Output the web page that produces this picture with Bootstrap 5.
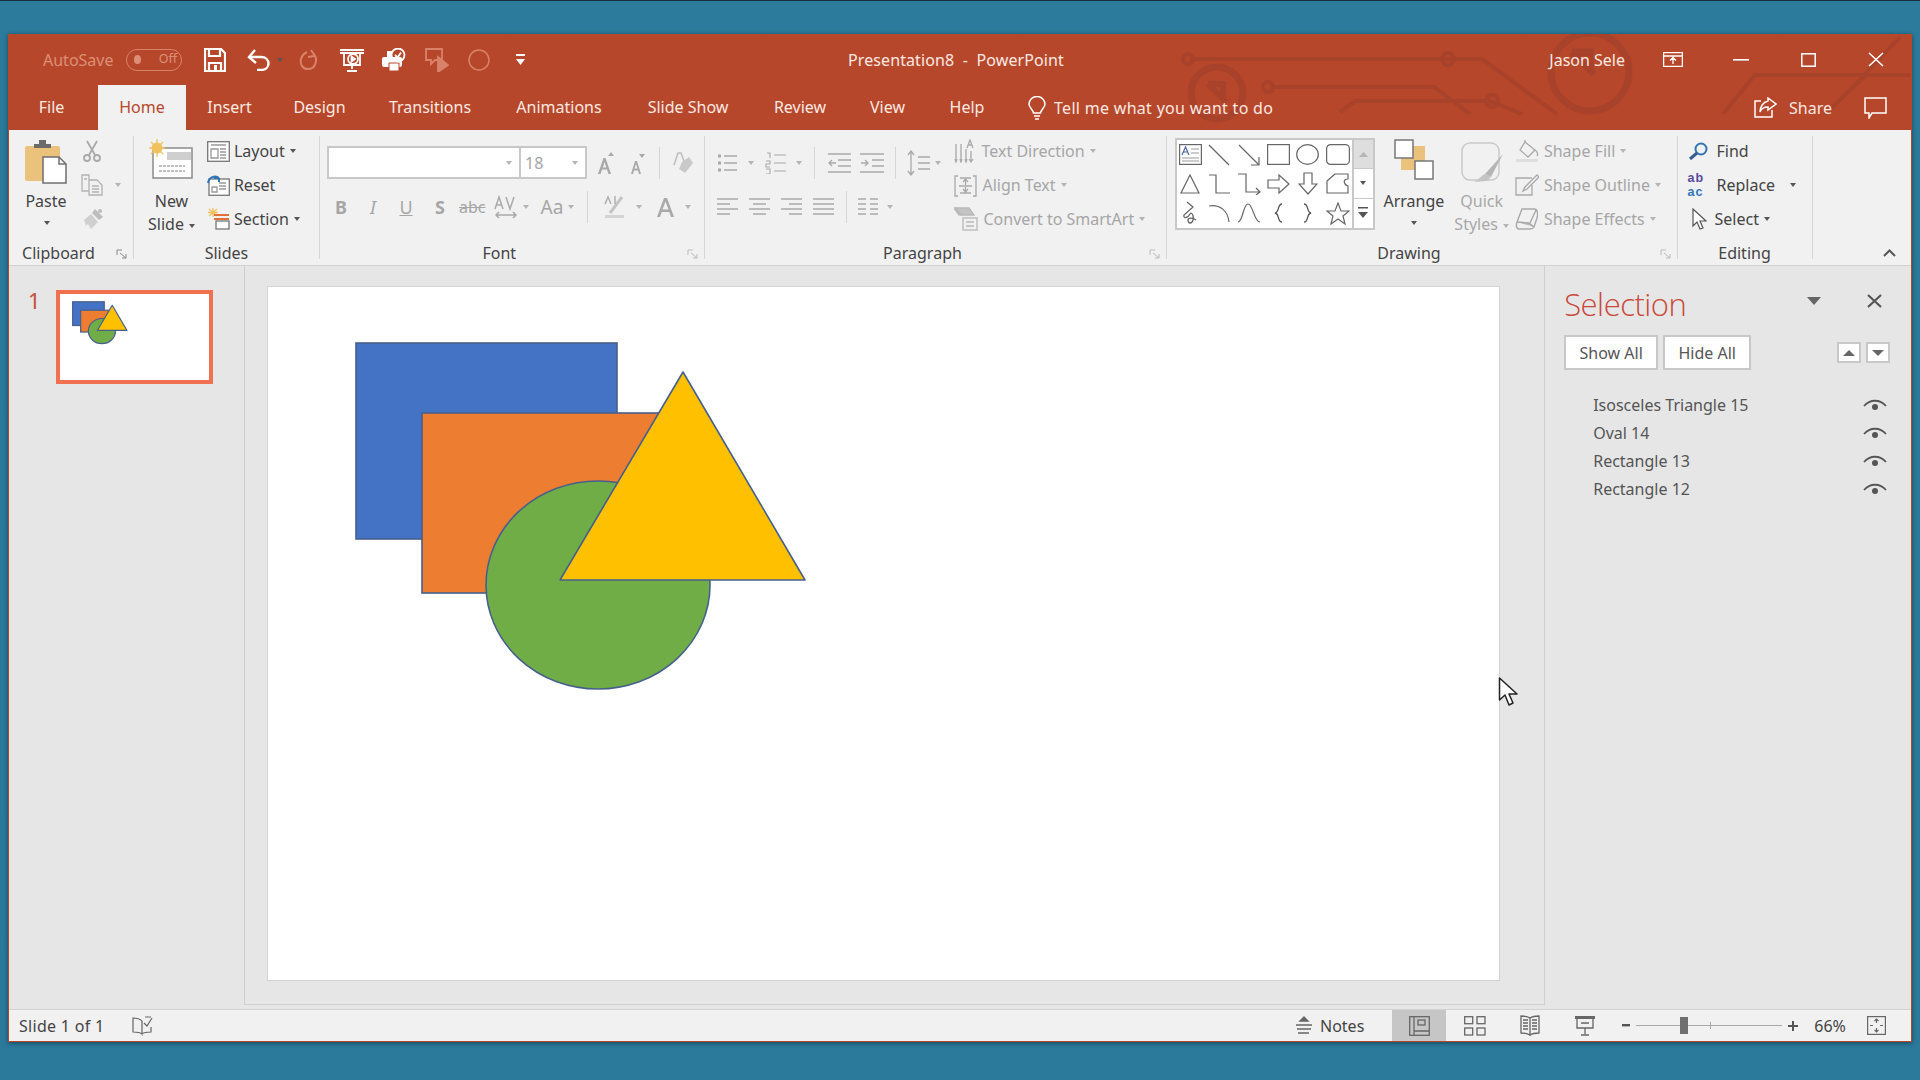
<!DOCTYPE html>
<html lang="en"><head><meta charset="utf-8"><title>PowerPoint</title>
<link href="https://cdn.jsdelivr.net/npm/bootstrap@5.3.0/dist/css/bootstrap.min.css" rel="stylesheet">
<script src="https://cdn.jsdelivr.net/npm/bootstrap@5.3.0/dist/js/bootstrap.bundle.min.js"></script>
<style>
html,body{height:1080px;overflow:hidden}
body{background:linear-gradient(#2c7b9c,#2b7a9b);border-top:1px solid #1b2c3e;padding:33px 0 0 8px;font-family:"Noto Sans","Open Sans",sans-serif;font-size:16px;color:#444;position:relative}
svg{display:block;flex:none}
.pp-win{width:1904px;height:1008px;background:#e6e6e6;border:1px solid #b7472a;border-top:0;box-shadow:0 1px 5px rgba(0,0,0,.45)}
.pp-head{background:#b7472a;color:#fbe9e3;height:96px}
.pp-circuit{position:absolute;left:0;top:0;pointer-events:none}
.pp-title{height:51px;position:relative;padding-right:27px}
.pp-tabs{height:45px;position:relative}
.qa-left{width:839px;flex:none}
.qa-auto{color:#dd8f78;margin-left:34px;width:83px}
.qa-pill{width:56px;height:22px;border:1.5px solid #d9826a;border-radius:11px;color:#dd8f78;font-size:12.5px;padding:0 4px 0 7px}
.qa-pill i{width:7px;height:9px;border-radius:50%;background:#dd8f78;display:block}
.doc-title{white-space:nowrap;letter-spacing:.1px}
.pp-tablist{display:grid;grid-template-columns:89px 88px 87px 93px 128px 130px 128px 96px 79px 80px;height:45px;flex-wrap:nowrap}
.pp-tablist .nav-link{padding:0;color:#fbe9e3;text-align:center;line-height:45px;height:45px}
.pp-tablist .nav-link.tab-file{padding-right:4px}
.pp-tablist .nav-link.active{background:#f1f1f1;color:#b7472a}
.tell-me{letter-spacing:.3px;line-height:44px}
.pp-ribbon{height:136px;background:#f1f1f1;border-bottom:1px solid #d2d2d2;position:relative}
.rb-g{margin-top:6px;height:123px;border-right:1px solid #d6d6d6;display:flex;flex-direction:column;position:relative}
.rb-b{height:107px;display:flex}
.rb-l{height:20px;line-height:20px;margin-bottom:-8px;text-align:center;color:#444;position:relative}
.rb-l.has-launch{padding-right:25px}
.launcher{position:absolute;right:6px;top:6px}
.g-clip{width:125px}.g-slides{width:186px}.g-font{width:384.5px}.g-para{width:462px}.g-draw{width:511px}.g-edit{width:135px}
.big{display:flex;flex-direction:column;align-items:center;line-height:23px;white-space:nowrap}
.big-i{height:54px;padding-top:3px}
.big-dim{color:#a8a8a8}
.cr{display:inline-block;width:0;height:0;border:3.5px solid transparent;border-bottom:0;border-top:4px solid #555;vertical-align:middle;margin-left:5px;flex:none}
.cr-d{border-top-color:#b4b4b4}
.stack{margin-top:-2px}
.rw{height:34px;display:flex;align-items:center;white-space:nowrap}
.lbl{margin-left:6px}
.lbl-s{margin-left:4px}
.dim{color:#a6a6a6}
.fname{width:193px;height:33px;background:#fff;border:2px solid #c8c8c8;border-right-width:1px;display:flex;align-items:center;justify-content:flex-end;padding-right:7px}
.fsize{width:67px;height:33px;background:#fff;border:2px solid #c8c8c8;border-left-width:1px;display:flex;align-items:center;justify-content:space-between;color:#a6a6a6;padding:0 7px 0 4px}
.fr1{height:33px;margin-top:10px;display:flex;align-items:center}
.fr2{height:34px;margin-top:11px;display:flex;align-items:center;color:#a6a6a6}
.g-letter{font-weight:700;font-size:18px;line-height:1;width:18px;text-align:center}
.fs-aa{font-size:19px}
.vsep{width:1px;height:40px;background:#d6d6d6;flex:none}
.vsep-s{height:32px}
.para-l{width:249px;flex:none}
.gal{width:200px;height:92px;border:2px solid #c8c8c8;background:#fff;margin:2px 0 0 8px;display:grid;grid-template-columns:27.5px 29.7px 29.7px 29.7px 29.7px 29.7px 1fr;grid-template-rows:repeat(3,1fr);justify-items:center;align-items:center}
.gal-s{grid-column:7;width:100%;height:100%;border-left:2px solid #c8c8c8;display:flex;align-items:center;justify-content:center}
.gal-s1{background:#dedede;border-bottom:1px solid #c8c8c8}
.gal-s2{border-bottom:1px solid #c8c8c8}
.m1{margin-left:1px}.m2{margin-left:2px}.m3{margin-left:3px}.m4{margin-left:4px}.m5{margin-left:5px}.m6{margin-left:6px}.m7{margin-left:7px}.m8{margin-left:8px}.m9{margin-left:9px}.m10{margin-left:10px}.m11{margin-left:11px}.m12{margin-left:12px}.m13{margin-left:13px}.m14{margin-left:14px}.m15{margin-left:15px}.m16{margin-left:16px}.m17{margin-left:17px}.m18{margin-left:18px}.m19{margin-left:19px}.m21{margin-left:21px}.m22{margin-left:22px}.m25{margin-left:25px}.m32{margin-left:32px}.m38{margin-left:38px}.m46{margin-left:46px}.m50{margin-left:50px}.m52{margin-left:52px}
.cbig{width:42px}
.rp-ico{width:23px;display:flex;flex-direction:column;font-family:"Liberation Sans",sans-serif;font-size:12.500px;line-height:14.500px;letter-spacing:1px;font-weight:700}
.rp-a{color:#5b4a9c}.rp-b{color:#2f75b5}
.pp-up{position:absolute;right:15px;top:119px}
.pp-main{height:743px}
.pane-t{width:235px;padding:21px 0 0 19px;color:#c6503f;font-size:22px;line-height:26px}
.thumbnum{width:27.5px}
.thumb-box{width:157px;height:94px;border:4px solid #f0704f;background:#fff;margin-top:3px;overflow:hidden}
.pane-c{width:1302px;height:739px;border-left:1px solid #cfcfcf;border-right:1px solid #cfcfcf;border-bottom:1px solid #cfcfcf;padding:20px 0 0 22px}
.pp-slide{width:1233px;height:695px;background:#fff;border:1px solid #d3d3d3}
.pane-s{width:366px;position:relative;padding:0 0 0 19px}
.sel-hd{height:69px;padding-right:29px}
.sel-title{color:#c9493a;font-family:"Open Sans",sans-serif;font-weight:300;font-size:31px;line-height:40px;margin-top:6px;letter-spacing:-.5px}
.sel-btn{--bs-btn-padding-y:0;--bs-btn-padding-x:0;--bs-btn-border-radius:0;--bs-btn-border-width:2px;--bs-btn-border-color:#c8c8c8;--bs-btn-bg:#fff;--bs-btn-color:#555;--bs-btn-font-size:16px;height:35px;line-height:30px}
.b-show{width:94px}.b-hide{width:88px;margin-left:5px}
.sel-arrows{margin-left:86px;gap:5px}
.sel-a{width:24px;height:21px;background:#fff;border:2px solid #c8c8c8;display:flex;align-items:center;justify-content:center}
.sel-list{margin-top:21px;width:323px}
.sel-list .list-group-item{height:28px;line-height:28px;padding:0 0 0 29px;display:flex;justify-content:space-between;align-items:center;background:transparent;color:#555;border:0}
.pp-status{height:32px;background:#f1f1f1;border-top:1px solid #d2d2d2;color:#444}
.st-left{width:123px;padding-left:10px;letter-spacing:.3px}
.st-notes{margin-left:1143px}
.st-view{width:54px;height:31px;display:flex;align-items:center;justify-content:center;margin-left:28px}
.st-view.on{background:#c6c6c6}
.st-sw{width:55px;display:flex;justify-content:center}
.z-track{width:146px;height:1px;background:#a8a8a8;position:relative;margin-left:6px}
.z-thumb{position:absolute;left:44px;top:-8px;width:8px;height:17px;background:#6f6f6f}
.z-tick{position:absolute;left:74px;top:-3px;width:1px;height:7px;background:#a8a8a8}
.pp-cursor{position:absolute;left:1498px;top:676px}
</style></head><body>
<svg width="0" height="0" class="position-absolute"><defs>
<g id="shapes" stroke="#46608c">
<rect x="88" y="56" width="261" height="196" fill="#4472c4"/>
<rect x="154" y="126" width="260" height="180" fill="#ed7d31"/>
<ellipse cx="330" cy="298" rx="112" ry="104" fill="#70ad47"/>
<path d="M415 85 537 293H292Z" fill="#ffc000" stroke-linejoin="round"/>
</g></defs></svg>

<div class="pp-win d-flex flex-column">
 <header class="pp-head position-relative">
  <svg class="pp-circuit" width="1902" height="96" viewBox="9 34 1902 96" fill="none" stroke="#a8422a" stroke-width="4"><path d="M1190 59H1482L1557 114M1440 59H1460M1285 87H1434L1470 114M1286 87H1270M1340 112 1355 101H1490L1522 114M1723 114 1755 75H1911M1825 114 1866 75M1850 90 1900 37M1880 75H1911"/><circle cx="1188" cy="59" r="5"/><circle cx="1448" cy="59" r="6"/><circle cx="1492" cy="101" r="6"/><circle cx="1268" cy="87" r="5"/><circle cx="1217" cy="93" r="26" stroke-width="7"/><path d="M1208 84h15v15M1208 84l18 18" stroke-width="6"/><circle cx="1590" cy="72" r="39" stroke-width="7"/><path d="M1572 52h18v18M1572 52l22 22" stroke-width="7"/></svg>
  <div class="pp-title d-flex align-items-center">
   <div class="qa-left d-flex align-items-center">
   <span class="qa-auto">AutoSave</span>
   <span class="qa-pill d-flex align-items-center justify-content-between"><i></i>Off</span>
   <svg class="m22" width="22" height="24" viewBox="0 0 22 24" fill="none" stroke="#fff" stroke-width="2.2"><path d="M1 1H17L21 5V23H1Z"/><path d="M5 1V8H16V1M5 23V15H17V23"/><rect x="10" y="17" width="3" height="6" fill="#fff" stroke="none"/></svg>
   <svg class="m21" width="24" height="22" viewBox="0 0 24 22" fill="none" stroke="#fff" stroke-width="2.4"><path d="M8 1 2 8 9 14"/><path d="M2 8H14C24 8 24 21 14 21H10"/></svg>
   <span class="cr m6"></span>
   <svg class="m16" width="19" height="23" viewBox="0 0 19 23" fill="none" stroke="#d9826a" stroke-width="2"><path d="M12 2 16 8 9 9M15 6C19 11 17 21 9 21 3 21 1 16 2 11 3 7 6 5 8 4"/></svg>
   <svg class="m22" width="24" height="24" viewBox="0 0 24 24" fill="none" stroke="#fff" stroke-width="1.8"><path d="M0 2H24M0 5H24M4 5V17H20V5M12 17V21M7 23H17"/><circle cx="13" cy="11" r="5"/><path d="M11.500 8.500 15 11 11.500 13.500Z" fill="#fff"/></svg>
   <svg class="m18" width="24" height="24" viewBox="0 0 24 24" fill="#fff"><rect x="0" y="9" width="20" height="10" rx="2"/><rect x="5" y="3" width="5" height="6"/><rect x="7" y="15" width="10" height="8" stroke="#b7472a"/><circle cx="16" cy="7" r="6.500" fill="none" stroke="#fff" stroke-width="1.800"/><path d="M13 7 15.500 9.500 19 4.500" fill="none" stroke="#fff" stroke-width="1.800"/></svg>
   <svg class="m19" width="24" height="24" viewBox="0 0 24 24" fill="none" stroke="#d9826a" stroke-width="1.8"><path d="M1 1H17V12H10L6 16V12H1Z"/><path d="M13 9 23 17 13 24Z" fill="#d9826a"/></svg>
   <svg class="m19" width="22" height="22" viewBox="0 0 22 22" fill="none" stroke="#d9826a" stroke-width="1.500"><circle cx="11" cy="11" r="10"/></svg>
   <svg class="m25" width="11" height="14" viewBox="0 0 11 14" fill="#fff"><rect x="1" y="1" width="9" height="2"/><path d="M1 6H10L5.500 12Z"/></svg>
   </div>
   <span class="doc-title">Presentation8&nbsp; -&nbsp; PowerPoint</span>
   <span class="ms-auto flex-shrink-0 text-nowrap">Jason Sele</span>
   <svg class="m38" width="20" height="15" viewBox="0 0 20 15" fill="none" stroke="#fff" stroke-width="1.300"><rect x=".6" y=".6" width="18.800" height="13.800"/><path d="M1 4H19M10 12V6M7 8.500 10 5.500 13 8.500"/></svg>
   <svg class="m50" width="16" height="2" viewBox="0 0 16 2"><rect width="16" height="1.600" fill="#fff"/></svg>
   <svg class="m52" width="15" height="14" viewBox="0 0 15 14" fill="none" stroke="#fff" stroke-width="1.500"><rect x=".8" y=".8" width="13.400" height="12.400"/></svg>
   <svg class="m52" width="16" height="15" viewBox="0 0 16 15" fill="none" stroke="#fff" stroke-width="1.500"><path d="M1 1 15 14M15 1 1 14"/></svg>
  </div>
  <div class="pp-tabs d-flex align-items-center">
   <ul class="nav pp-tablist">
    <li><a class="nav-link tab-file" href="#">File</a></li>
    <li><a class="nav-link active" href="#">Home</a></li>
    <li><a class="nav-link" href="#">Insert</a></li>
    <li><a class="nav-link" href="#">Design</a></li>
    <li><a class="nav-link" href="#">Transitions</a></li>
    <li><a class="nav-link" href="#">Animations</a></li>
    <li><a class="nav-link" href="#">Slide Show</a></li>
    <li><a class="nav-link" href="#">Review</a></li>
    <li><a class="nav-link" href="#">View</a></li>
    <li><a class="nav-link" href="#">Help</a></li>
   </ul>
   <svg class="m21" width="18" height="24" viewBox="0 0 18 24" fill="none" stroke="#fff" stroke-width="1.500"><path d="M5.500 17C5 13 1 12 1 8A8 7.500 0 0 1 17 8C17 12 13 13 12.500 17ZM6 20H12M7 23H11"/></svg>
   <span class="m8 tell-me">Tell me what you want to do</span>
   <svg class="ms-auto" width="23" height="21" viewBox="0 0 23 21" fill="none" stroke="#fff" stroke-width="1.500"><path d="M7 4H1V20H18V13"/><path d="M14 1 22 7 14 13V10C10 10 7 12 6 15 6 10 9 5 14 4Z"/></svg>
   <span class="m12">Share</span>
   <svg class="m32 me-4" width="23" height="22" viewBox="0 0 23 22" fill="none" stroke="#fff" stroke-width="1.500"><path d="M1 1H22V16H8L5 21V16H1Z"/></svg>
  </div>
 </header>

 <section class="pp-ribbon d-flex">
  <div class="rb-g g-clip">
   <div class="rb-b">
    <div class="big cbig m16"><div class="big-i"><svg width="42" height="45" viewBox="0 0 42 45"><rect x="0" y="7" width="35" height="35" rx="2" fill="#ebc27c"/><path d="M9 9V5H14V1H21V5H26V9Z" fill="#6b6b6b"/><path d="M18 18H34L41 25V44H18Z" fill="#fff" stroke="#6f6f6f" stroke-width="1.500"/><path d="M34 18V25H41" fill="none" stroke="#6f6f6f" stroke-width="1.500"/></svg></div><span>Paste</span><span class="cr m1 mt-2"></span></div>
    <div class="stack m14">
     <div class="rw"><svg width="22" height="22" viewBox="0 0 22 22" fill="none" stroke="#a9a9a9" stroke-width="1.800"><path d="M6 1 14 15M16 1 8 15"/><circle cx="6" cy="18" r="3"/><circle cx="16" cy="18" r="3"/></svg></div>
     <div class="rw"><svg width="22" height="22" viewBox="0 0 22 22" fill="none" stroke="#b3b3b3" stroke-width="1.300"><path d="M8 6V1H1V17H8"/><path d="M8 6H16L21 11V21H8Z" fill="#f1f1f1"/><path d="M11 12H18M11 15H18M11 18H18M3 5H6"/></svg><span class="cr cr-d m12"></span></div>
     <div class="rw"><svg width="24" height="22" viewBox="0 0 24 22" fill="#bdbdbd"><path d="M14 1 22 9 18 12 11 5Z"/><path d="M3 12 10 6 17 14 10 21 7 16 5 18Z" fill="#d0d0d0"/><circle cx="19" cy="3" r="2"/></svg></div>
    </div>
   </div>
   <div class="rb-l has-launch">Clipboard<svg class="launcher" width="11" height="10" viewBox="0 0 11 10" fill="none" stroke="#888" stroke-width="1"><path d="M1 6V1H6M4 4 10 9M10 5V9H6"/></svg></div>
  </div>
  <div class="rb-g g-slides">
   <div class="rb-b">
    <div class="big m14"><div class="big-i"><svg width="44" height="41" viewBox="0 0 44 41"><path d="M4 9H43V39H4Z" fill="#fff" stroke="#8a8a8a" stroke-width="1.500"/><rect x="18" y="13" width="24" height="8" fill="#cfcfcf"/><path d="M10 27H36M10 32H36" stroke="#aaa" stroke-width="1.500" stroke-dasharray="3 1"/><circle cx="8" cy="9" r="5.500" fill="#efc25f"/><path d="M8 0V18M0 9H16M2 3 14 15M14 3 2 15" stroke="#efc25f" stroke-width="1.300"/></svg></div><span>New</span><span class="text-nowrap">Slide<i class="cr"></i></span></div>
    <div class="stack m12">
     <div class="rw"><svg width="23" height="21" viewBox="0 0 23 21" fill="#fff" stroke="#777" stroke-width="1.300"><rect x=".7" y=".7" width="21.600" height="19.600"/><path d="M4 4H19M4 8H11V17H4ZM13 8H19M13 11H19M13 14H19M13 17H19" fill="none" stroke="#999"/></svg><span class="lbl-s">Layout</span><i class="cr"></i></div>
     <div class="rw"><svg width="23" height="21" viewBox="0 0 23 21" fill="#fff" stroke="#777" stroke-width="1.300"><rect x="2" y="4" width="20.300" height="16.300"/><path d="M12 8H19M12 11H19M12 14H19M5 12H10V17H5Z" fill="none" stroke="#999"/><path d="M1 8C2 2 8 0 12 3M12 3 7 3M12 3V7" fill="none" stroke="#2f75b5" stroke-width="2"/></svg><span class="lbl-s">Reset</span></div>
     <div class="rw"><svg width="23" height="22" viewBox="0 0 23 22" fill="none"><path d="M6 0V9M1 4.500H11M2 1 10 8M10 1 2 8" stroke="#efc25f" stroke-width="1.300"/><path d="M7 7H22M7 11H22" stroke="#e2703a" stroke-width="2"/><rect x="9" y="13" width="13" height="8" fill="#fff" stroke="#777" stroke-width="1.300"/></svg><span class="lbl-s">Section</span><i class="cr"></i></div>
    </div>
   </div>
   <div class="rb-l">Slides</div>
  </div>
  <div class="rb-g g-font">
   <div class="rb-b flex-column">
    <div class="fr1 m7"><div class="fname"><i class="cr cr-d"></i></div><div class="fsize"><span>18</span><i class="cr cr-d"></i></div>
     <svg class="m10" width="18" height="24" viewBox="0 0 18 24" fill="#a9a9a9"><path d="M1 23 6.500 7H8.500L14 23H11.500L10 18.500H5L3.500 23ZM6 16.500H9.200L7.500 11Z"/><path d="M11 5 14 1 17 5Z"/></svg>
     <svg class="m15" width="16" height="24" viewBox="0 0 16 24" fill="#a9a9a9"><path d="M1 23 5 10H7L11 23H9L8 19.500H4L3 23ZM4.500 17.500H7.500L6 13Z"/><path d="M9 3H15L12 7Z"/></svg>
     <span class="vsep vsep-s m13"></span>
     <svg class="m13" width="20" height="24" viewBox="0 0 20 24" fill="#c9c9c9"><path d="M1 14 5 2H8L11 10" fill="none" stroke="#bdbdbd" stroke-width="1.500"/><path d="M9 11 16 6 20 12 12 22 6 18Z"/></svg>
    </div>
    <div class="fr2 m12">
     <span class="g-letter">B</span><i class="g-letter m14 fw-normal fst-italic">I</i><u class="g-letter m15 fw-normal">U</u><span class="g-letter m16 fw-bold">S</span><s class="m10 text-nowrap">abc</s>
     <svg class="m8" width="24" height="24" viewBox="0 0 24 24" fill="none" stroke="#a9a9a9" stroke-width="1.500"><path d="M1 14 5 2 9 14M3 10H7M12 2 16 14 20 2M2 20H22M5 17 2 20 5 23M19 17 22 20 19 23"/></svg><i class="cr cr-d m5"></i>
     <span class="m12 text-nowrap fs-aa">Aa</span><i class="cr cr-d m5"></i>
     <span class="vsep vsep-s m13"></span>
     <svg class="m16" width="23" height="24" viewBox="0 0 23 24" fill="none" stroke="#a9a9a9" stroke-width="1.300"><path d="M18 2 6 18" stroke-width="3" stroke="#c4c4c4"/><path d="M1 9 4 2 7 9M11 1V9"/><rect x="1" y="20" width="19" height="3" fill="#d4d4d4" stroke="none"/></svg><i class="cr cr-d m9"></i>
     <svg class="m15" width="17" height="20" viewBox="0 0 17 20" fill="#a9a9a9"><path d="M0 20 7 1H10L17 20H14L12.300 15H4.700L3 20ZM5.500 12.500H11.500L8.500 4.500Z"/></svg><i class="cr cr-d m11"></i>
    </div>
   </div>
   <div class="rb-l has-launch">Font<svg class="launcher" width="11" height="10" viewBox="0 0 11 10" fill="none" stroke="#bbb" stroke-width="1"><path d="M1 6V1H6M4 4 10 9M10 5V9H6"/></svg></div>
  </div>
  <div class="rb-g g-para">
   <div class="rb-b">
    <div class="d-flex flex-column para-l">
     <div class="fr1 m12">
      <svg width="20" height="22" viewBox="0 0 20 22" fill="none" stroke="#a9a9a9" stroke-width="1.300"><path d="M7 4H20M7 11H20M7 18H20"/><path d="M1 4H4M1 11H4M1 18H4" stroke-width="3"/></svg><i class="cr cr-d m11"></i>
      <svg class="m11" width="21" height="22" viewBox="0 0 21 22" fill="none" stroke="#a9a9a9" stroke-width="1.300"><path d="M9 3H21M9 11H21M9 19H21M2 1H5V6M1 9H5V12H1V15H5M1 17H5V22H1" stroke-width="1.100"/></svg><i class="cr cr-d m10"></i>
      <span class="vsep vsep-s m12"></span>
      <svg class="m13" width="23" height="22" viewBox="0 0 23 22" fill="none" stroke="#a9a9a9" stroke-width="1.300"><path d="M0 2H23M0 20H23M10 8H23M10 14H23M8 11H1M4 8 1 11 4 14" /></svg>
      <svg class="m9" width="24" height="22" viewBox="0 0 24 22" fill="none" stroke="#a9a9a9" stroke-width="1.300"><path d="M0 2H24M0 20H24M12 8H24M12 14H24M1 11H8M5 8 8 11 5 14"/></svg>
      <span class="vsep vsep-s m11"></span>
      <svg class="m11" width="23" height="26" viewBox="0 0 23 26" fill="none" stroke="#a9a9a9" stroke-width="1.300"><path d="M4 2V24M1 5 4 1 7 5M1 21 4 25 7 21M11 7H23M11 13H23M11 19H23"/></svg><i class="cr cr-d m5"></i>
     </div>
     <div class="fr2 m12">
      <svg width="21" height="18" viewBox="0 0 21 18" fill="none" stroke="#a9a9a9" stroke-width="1.400"><path d="M0 1H21M0 6H13M0 11H21M0 16H13"/></svg>
      <svg class="m11" width="21" height="18" viewBox="0 0 21 18" fill="none" stroke="#a9a9a9" stroke-width="1.400"><path d="M0 1H21M4 6H17M0 11H21M4 16H17"/></svg>
      <svg class="m11" width="21" height="18" viewBox="0 0 21 18" fill="none" stroke="#a9a9a9" stroke-width="1.400"><path d="M0 1H21M8 6H21M0 11H21M8 16H21"/></svg>
      <svg class="m11" width="21" height="18" viewBox="0 0 21 18" fill="none" stroke="#a9a9a9" stroke-width="1.400"><path d="M0 1H21M0 6H21M0 11H21M0 16H21"/></svg>
      <span class="vsep vsep-s m12"></span>
      <svg class="m11" width="20" height="18" viewBox="0 0 20 18" fill="none" stroke="#a9a9a9" stroke-width="1.400"><path d="M0 1H8M0 6H8M0 11H8M0 16H8M12 1H20M12 6H20M12 11H20M12 16H20"/></svg><i class="cr cr-d m9"></i>
     </div>
    </div>
    <div class="stack">
     <div class="rw dim"><svg width="22" height="24" viewBox="0 0 22 24" fill="none" stroke="#a9a9a9" stroke-width="1.300"><path d="M2 5V22M7 5V22M12 10V22M1 20 2 23 3 20M6 20 7 23 8 20M11 20 12 23 13 20M17 12V22M15 20 17 23 19 20"/><path d="M13 9 16 1 19 9M14.500 6H17.500"/></svg><span class="lbl">Text Direction</span><i class="cr cr-d"></i></div>
     <div class="rw dim"><svg width="23" height="23" viewBox="0 0 23 23" fill="none" stroke="#a9a9a9" stroke-width="1.300"><path d="M4 2H1V22H4M19 2H22V22H19"/><path d="M6 4H17M6 19H17M11.500 6V11M9 8 11.500 5 14 8M11.500 13V18M9 15 11.500 18 14 15M5 12H18"/></svg><span class="lbl">Align Text</span><i class="cr cr-d"></i></div>
     <div class="rw dim"><svg width="24" height="24" viewBox="0 0 24 24" fill="none" stroke="#b8b8b8" stroke-width="1.300"><path d="M1 1H15L20 8H6Z" fill="#c4c4c4"/><path d="M6 8 1 1" stroke-width="3"/><rect x="9" y="11" width="14" height="12" fill="#f1f1f1"/><path d="M12 15H20M12 19H20"/></svg><span class="lbl">Convert to SmartArt</span><i class="cr cr-d"></i></div>
    </div>
   </div>
   <div class="rb-l has-launch">Paragraph<svg class="launcher" width="11" height="10" viewBox="0 0 11 10" fill="none" stroke="#bbb" stroke-width="1"><path d="M1 6V1H6M4 4 10 9M10 5V9H6"/></svg></div>
  </div>
  <div class="rb-g g-draw">
   <div class="rb-b">
    <div class="gal">
     <svg width="23" height="21" viewBox="0 0 23 21" fill="none" stroke="#666" stroke-width="1.200"><rect x=".6" y=".6" width="21.800" height="19.800"/><path d="M3 11 6.500 3 10 11M4.500 8H8.500" stroke="#4a67a8"/><path d="M12 5H20M12 9H20M3 14H20M3 17H20" stroke="#999"/></svg>
     <svg width="22" height="22" viewBox="0 0 22 22" fill="none" stroke="#666" stroke-width="1.200"><path d="M1 1 21 21"/></svg>
     <svg width="22" height="22" viewBox="0 0 22 22" fill="none" stroke="#666" stroke-width="1.200"><path d="M1 1 21 21M21 13V21H13"/></svg>
     <svg width="23" height="21" viewBox="0 0 23 21" fill="none" stroke="#666" stroke-width="1.200"><rect x=".6" y=".6" width="21.800" height="19.800"/></svg>
     <svg width="23" height="21" viewBox="0 0 23 21" fill="none" stroke="#666" stroke-width="1.200"><ellipse cx="11.500" cy="10.500" rx="10.800" ry="9.800"/></svg>
     <svg width="24" height="21" viewBox="0 0 24 21" fill="none" stroke="#666" stroke-width="1.200"><rect x=".6" y=".6" width="22.800" height="19.800" rx="4"/></svg>
     <div class="gal-s gal-s1"><svg width="9" height="5" viewBox="0 0 9 5"><path d="M0 5 4.500 0 9 5Z" fill="#b5b5b5"/></svg></div>
     <svg width="20" height="20" viewBox="0 0 20 20" fill="none" stroke="#666" stroke-width="1.200"><path d="M10 1 19 19H1Z"/></svg>
     <svg width="22" height="20" viewBox="0 0 22 20" fill="none" stroke="#666" stroke-width="1.200"><path d="M1 1H8V19H22"/></svg>
     <svg width="24" height="22" viewBox="0 0 24 22" fill="none" stroke="#666" stroke-width="1.200"><path d="M1 1H9V19H22M19 15 23 19 19 22"/></svg>
     <svg width="23" height="20" viewBox="0 0 23 20" fill="none" stroke="#666" stroke-width="1.200"><path d="M1 6H12V1L22 10 12 19V14H1Z"/></svg>
     <svg width="20" height="23" viewBox="0 0 20 23" fill="none" stroke="#666" stroke-width="1.200"><path d="M6 1H14V12H19L10 22 1 12H6Z"/></svg>
     <svg width="23" height="21" viewBox="0 0 23 21" fill="none" stroke="#666" stroke-width="1.200"><path d="M1 20V8L9 1H22V6C16 6 18 12 22 13V20Z" stroke-linejoin="round"/></svg>
     <div class="gal-s gal-s2"><span class="cr m-0"></span></div>
     <svg width="14" height="24" viewBox="0 0 14 24" fill="none" stroke="#666" stroke-width="1.300"><path d="M4 1 10 6 1 14C0 18 5 17 7 13 9 10 11 16 10 19 9 23 5 23 5 19 5 17 9 16 13 19"/></svg>
     <svg width="22" height="20" viewBox="0 0 22 20" fill="none" stroke="#666" stroke-width="1.200"><path d="M1 3C12 1 20 8 21 19"/></svg>
     <svg width="24" height="20" viewBox="0 0 24 20" fill="none" stroke="#666" stroke-width="1.200"><path d="M1 19C6 19 6 1 11 1S17 19 23 19"/></svg>
     <svg width="9" height="20" viewBox="0 0 9 20" fill="none" stroke="#555" stroke-width="1.300"><path d="M8 1C3 1 6 9 1 10 6 11 3 19 8 19"/></svg>
     <svg width="9" height="20" viewBox="0 0 9 20" fill="none" stroke="#555" stroke-width="1.300"><path d="M1 1C6 1 3 9 8 10 3 11 6 19 1 19"/></svg>
     <svg width="24" height="23" viewBox="0 0 24 23" fill="none" stroke="#666" stroke-width="1.200"><path d="M12 1 15 9H23L17 14 19 22 12 17 5 22 7 14 1 9H9Z"/></svg>
     <div class="gal-s"><svg width="10" height="12" viewBox="0 0 10 12" fill="#555"><rect width="10" height="1.500"/><path d="M0 5H10L5 11Z"/></svg></div>
    </div>
    <div class="big m9"><div class="big-i"><svg width="40" height="41" viewBox="0 0 40 41"><rect x="7" y="7" width="24" height="24" fill="#ebc27c"/><rect x="1" y="1" width="18" height="18" fill="#fff" stroke="#777" stroke-width="1.500"/><rect x="21" y="22" width="18" height="18" fill="#fff" stroke="#777" stroke-width="1.500"/></svg></div><span>Arrange</span><span class="cr m-0 mt-2"></span></div>
    <div class="big big-dim m10"><div class="big-i"><svg width="44" height="46" viewBox="0 0 44 46" fill="none"><rect x="2" y="4" width="37" height="37" rx="8" stroke="#c9c9c9" stroke-width="1.500"/><path d="M43 15 25 35 31 38Z" fill="#b5b5b5"/><path d="M25 35C20 37 20 41 13 43L27 42 31 38Z" fill="#c4c4c4"/></svg></div><span>Quick</span><span class="text-nowrap">Styles<i class="cr cr-d"></i></span></div>
    <div class="stack m6">
     <div class="rw dim"><svg width="24" height="24" viewBox="0 0 24 24" fill="none" stroke="#a9a9a9" stroke-width="1.300"><path d="M10 3 20 11 13 18 5 11Z"/><path d="M10 3V1M20 11C23 13 23 16 22 17"/><rect x="1" y="20" width="22" height="3" fill="#dedede" stroke="none"/></svg><span class="lbl m5">Shape Fill</span><i class="cr cr-d"></i></div>
     <div class="rw dim"><svg width="24" height="22" viewBox="0 0 24 22" fill="none" stroke="#a9a9a9" stroke-width="1.300"><path d="M17 4H1V21H17V11"/><path d="M22 1 10 13 8 17 12 15 24 3Z"/></svg><span class="lbl m5">Shape Outline</span><i class="cr cr-d"></i></div>
     <div class="rw dim"><svg width="23" height="22" viewBox="0 0 23 22" fill="none" stroke="#a9a9a9" stroke-width="1.400"><path d="M7 1H19C23 1 23 6 22 10L19 19C18 21 16 21 15 21H4C1 21 1 17 2 14Z"/><path d="M2 14 14 15 19 19" fill="#bbb"/><path d="M15 15 21 2" /></svg><span class="lbl m6">Shape Effects</span><i class="cr cr-d"></i></div>
    </div>
   </div>
   <div class="rb-l has-launch">Drawing<svg class="launcher" width="11" height="10" viewBox="0 0 11 10" fill="none" stroke="#bbb" stroke-width="1"><path d="M1 6V1H6M4 4 10 9M10 5V9H6"/></svg></div>
  </div>
  <div class="rb-g g-edit">
   <div class="rb-b">
    <div class="stack m10">
     <div class="rw"><svg width="23" height="18" viewBox="0 0 23 18" fill="none"><circle cx="13" cy="7" r="5.500" stroke="#2f75b5" stroke-width="2"/><path d="M9 11 2 17" stroke="#355d8e" stroke-width="3"/></svg><span class="lbl">Find</span></div>
     <div class="rw"><span class="rp-ico"><span class="rp-a">ab</span><span class="rp-b">ac</span></span><span class="lbl">Replace</span><i class="cr m15"></i></div>
     <div class="rw"><svg class="m4" width="15" height="23" viewBox="0 0 15 23" fill="#fff" stroke="#555" stroke-width="1.200"><path d="M1 1V18L5 14 8 21 11 20 8 13H14Z"/></svg><span class="lbl m8">Select</span><i class="cr"></i></div>
    </div>
   </div>
   <div class="rb-l">Editing</div>
  </div>
  <svg class="pp-up" width="13" height="8" viewBox="0 0 13 8" fill="none" stroke="#555" stroke-width="2"><path d="M1 7 6.500 1.500 12 7"/></svg>
 </section>

 <div class="pp-main d-flex">
  <aside class="pane-t d-flex"><span class="thumbnum">1</span>
   <div class="thumb-box"><svg class="m2" width="149" height="86" viewBox="0 0 1231 694" stroke-width="10"><use href="#shapes"/></svg></div>
  </aside>
  <div class="pane-c">
   <div class="pp-slide"><svg width="1231" height="693" viewBox="0 0 1231 693" stroke-width="1.600"><use href="#shapes"/></svg></div>
  </div>
  <aside class="pane-s">
   <div class="sel-hd d-flex align-items-center">
    <h2 class="sel-title mb-0 me-auto">Selection</h2>
    <svg width="14" height="8" viewBox="0 0 14 8"><path d="M0 0H14L7 8Z" fill="#666"/></svg>
    <svg class="m46" width="15" height="14" viewBox="0 0 15 14" fill="none" stroke="#555" stroke-width="2.200"><path d="M1 1 14 13M14 1 1 13"/></svg>
   </div>
   <div class="d-flex align-items-center">
    <button class="btn sel-btn b-show">Show All</button><button class="btn sel-btn b-hide">Hide All</button>
    <div class="d-flex sel-arrows"><span class="sel-a"><svg width="12" height="6" viewBox="0 0 12 6"><path d="M0 6 6 0 12 6Z" fill="#666"/></svg></span><span class="sel-a"><svg width="12" height="6" viewBox="0 0 12 6"><path d="M0 0H12L6 6Z" fill="#666"/></svg></span></div>
   </div>
   <ul class="list-group sel-list">
    <li class="list-group-item">Isosceles Triangle 15<svg width="24" height="12" viewBox="0 0 24 12" fill="none" stroke="#555" stroke-width="1.800"><path d="M1 7C7 0 17 0 23 7"/><circle cx="12" cy="8" r="3" fill="#555" stroke="none"/></svg></li>
    <li class="list-group-item">Oval 14<svg width="24" height="12" viewBox="0 0 24 12" fill="none" stroke="#555" stroke-width="1.800"><path d="M1 7C7 0 17 0 23 7"/><circle cx="12" cy="8" r="3" fill="#555" stroke="none"/></svg></li>
    <li class="list-group-item">Rectangle 13<svg width="24" height="12" viewBox="0 0 24 12" fill="none" stroke="#555" stroke-width="1.800"><path d="M1 7C7 0 17 0 23 7"/><circle cx="12" cy="8" r="3" fill="#555" stroke="none"/></svg></li>
    <li class="list-group-item">Rectangle 12<svg width="24" height="12" viewBox="0 0 24 12" fill="none" stroke="#555" stroke-width="1.800"><path d="M1 7C7 0 17 0 23 7"/><circle cx="12" cy="8" r="3" fill="#555" stroke="none"/></svg></li>
   </ul>
  </aside>
 </div>

 <footer class="pp-status d-flex align-items-center">
  <span class="st-left text-nowrap">Slide 1 of 1</span>
  <svg width="21" height="20" viewBox="0 0 21 20" fill="none" stroke="#666" stroke-width="1.200"><path d="M10 5C8 3 4 2 1 2V16C4 16 8 16 10 18 12 16 14 16 19 16V11M10 5V18M10 20H11"/><path d="M12 7 15 10 20 2M13 1H19"/></svg>
  <svg class="st-notes" width="16" height="19" viewBox="0 0 16 19" fill="none" stroke="#666" stroke-width="1.300"><path d="M0 9H16M1 13H15M2 17H13"/><path d="M4 5 8 1 12 5Z" fill="#666"/></svg>
  <span class="m8">Notes</span>
  <span class="st-view on"><svg width="21" height="20" viewBox="0 0 21 20" fill="none" stroke="#666" stroke-width="1.300"><rect x=".7" y=".7" width="19.600" height="18.600"/><path d="M5 1V19M5 15H20"/><rect x="9" y="4" width="7" height="5"/></svg></span>
  <span class="st-sw m1"><svg width="22" height="20" viewBox="0 0 22 20" fill="none" stroke="#666" stroke-width="1.300"><rect x=".7" y=".7" width="8" height="7"/><rect x="13" y=".7" width="8" height="7"/><rect x=".7" y="12" width="8" height="7"/><rect x="13" y="12" width="8" height="7"/></svg></span>
  <span class="st-sw"><svg width="20" height="22" viewBox="0 0 20 22" fill="none" stroke="#666" stroke-width="1.300"><path d="M10 3C7 1 4 1 1 1V18C4 18 7 18 10 20 13 18 16 18 19 18V1C16 1 13 1 10 3ZM10 3V21M3 5H8M3 8H8M3 11H8M3 14H8M12 5H17M12 8H17M12 11H17M12 14H17"/></svg></span>
  <span class="st-sw"><svg width="20" height="20" viewBox="0 0 20 20" fill="none" stroke="#666" stroke-width="1.300"><path d="M0 1.500H20" stroke-width="3"/><path d="M2 3V12H18V3M10 12V18M6 19H14M6 7H14"/></svg></span>
  <svg class="m10" width="8" height="3" viewBox="0 0 8 3"><rect width="8" height="2.400" fill="#555"/></svg>
  <div class="z-track"><span class="z-thumb"></span><span class="z-tick"></span></div>
  <svg class="m6" width="10" height="10" viewBox="0 0 10 10"><path d="M0 5H10M5 0V10" stroke="#555" stroke-width="2"/></svg>
  <span class="m16 text-nowrap">66%</span>
  <svg class="m21" width="19" height="19" viewBox="0 0 19 19" fill="none" stroke="#666" stroke-width="1.200"><rect x=".6" y=".6" width="17.800" height="17.800"/><path d="M9.500 3V7M7.500 5 9.500 3 11.500 5M9.500 16V12M7.500 14 9.500 16 11.500 14M3 9.500H6M13 9.500H16"/></svg>
 </footer>
</div>
<svg class="pp-cursor" width="20" height="30" viewBox="0 0 20 30" fill="#fff" stroke="#222" stroke-width="1.500"><path d="M1.500 1V23L7 18 11 28 15 26 11 17H19Z" stroke-linejoin="round"/></svg>
</body></html>
